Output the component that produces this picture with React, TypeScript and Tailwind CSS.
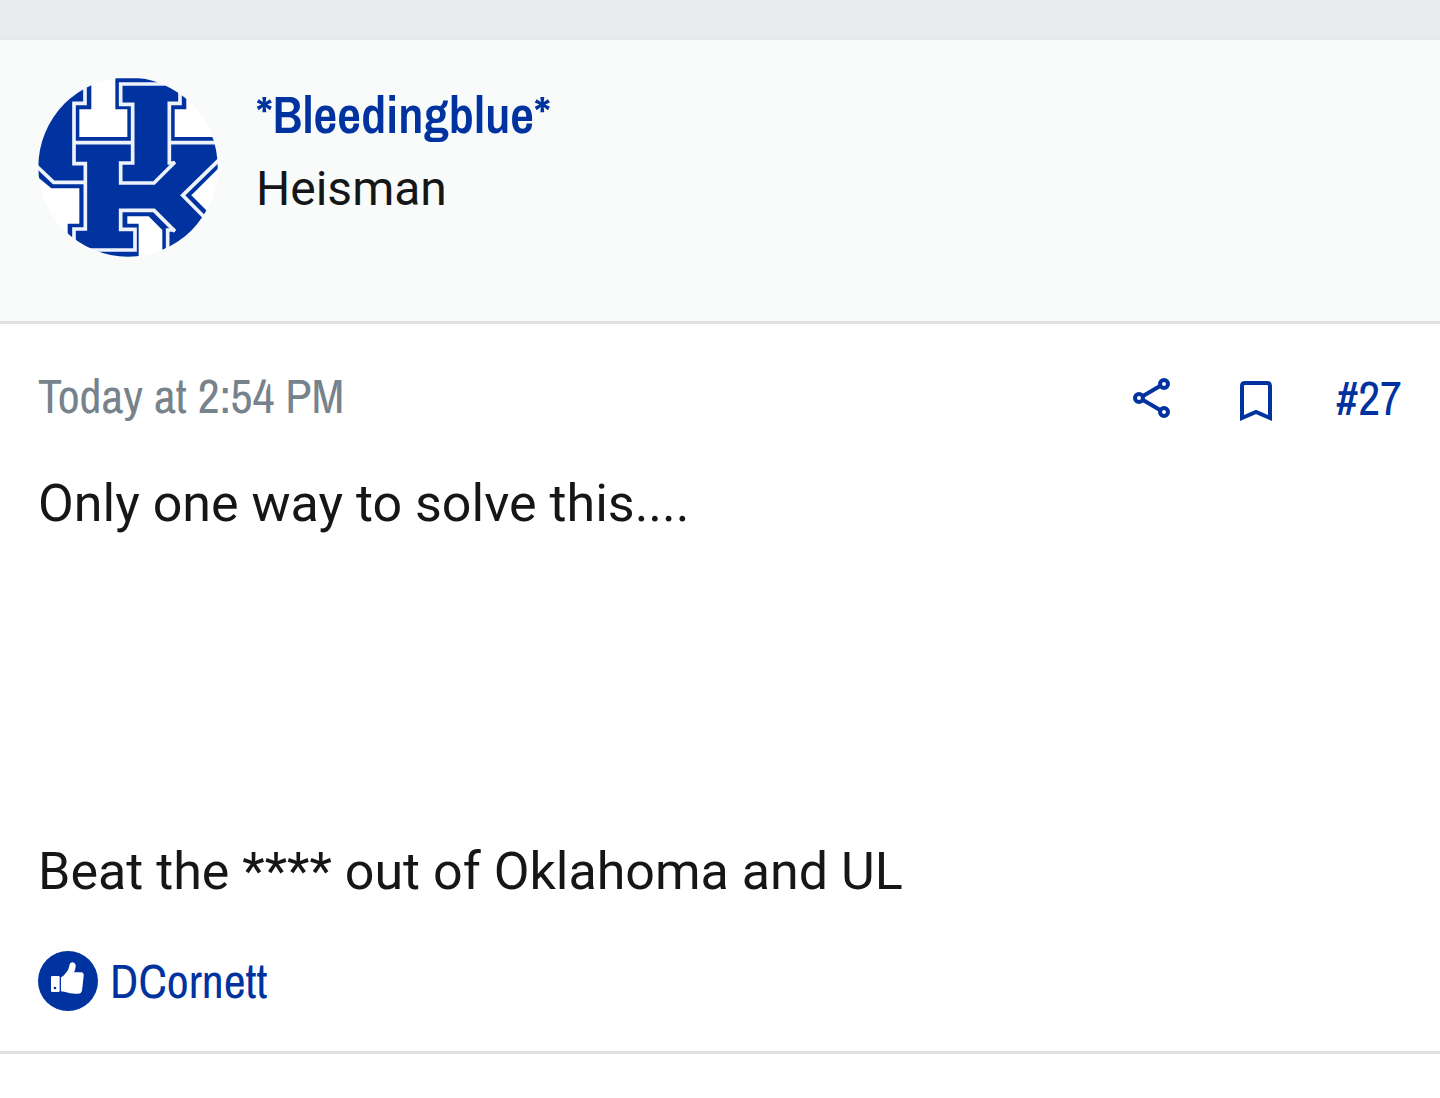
const LogoAvatar = () => {
  return (
    <svg className="size-[180px] shrink-0" viewBox="30 30 540 540" role="img" aria-label="*Bleedingblue*">
      <mask id="avatar-circle">
        <circle cx="300" cy="300" r="269" fill="#fff" />
      </mask>
      <g mask="url(#avatar-circle)">
        <rect x="0" y="0" width="600" height="600" fill="#0033a0" />
        <g fill="#fff">
          <path d="M190 0V127H154V210H298V127H262V34H400L475 80V127H440V210H600V0Z" />
          <path d="M0 306L70 364H154V470H119V600H0Z" />
          <path d="M298 448H362L403 489V600H332V470H298Z" />
          <path d="M600 275L490 385L600 495Z" />
        </g>
        <g fill="none" stroke="#eef2fb" strokeWidth="11">
          <path d="M171 20V109H138V290H172V486H138V530" />
          <path d="M20 292L77 346H172" />
          <path d="M138 227H314" />
          <path d="M410 51H278V112H314V288H278V348H378L441 285" />
          <path d="M456 60V109H424V288H441" />
          <path d="M424 227H600" />
          <path d="M580 272L464 385L550 472" />
          <path d="M441 493L378 430H278V487H321V549H140" />
          <path d="M419 580V489H441" />
        </g>
      </g>
    </svg>
  )
}

const ShareIcon = () => {
  return (
    <svg className="h-[42px] w-[38px]" viewBox="-2 0 38 42" fill="none" stroke="currentColor" strokeWidth="4" aria-hidden="true">
      <circle cx="30" cy="7" r="4" />
      <circle cx="5" cy="21" r="4" />
      <circle cx="30" cy="35" r="4" />
      <path d="M9 19L26 9M9 23L26 33" />
    </svg>
  )
}

const BookmarkIcon = () => {
  return (
    <svg className="h-12 w-[38px]" viewBox="0 0 38 48" fill="none" stroke="currentColor" strokeWidth="4" aria-hidden="true">
      <path d="M8 44V12Q8 9 11 9H33Q36 9 36 12V44L22 38Z" />
    </svg>
  )
}

const LikeIcon = () => {
  return (
    <svg className="size-[60px] shrink-0" viewBox="0 0 180 180" aria-hidden="true">
      <circle cx="90" cy="90" r="90" fill="#0033a0" />
      <g fill="#fff">
        <path d="M43 75H61Q65 75 65 79V119Q65 123 61 123H43Q39 123 39 119V79Q39 75 43 75Z" />
        <path d="M69 79Q77 75 84 65Q92 57 94 44Q96 34 104 34Q114 36 113 47Q112 56 108 64H130Q138 65 137 74L132 119Q130 127 122 128Q108 129 96 127Q82 122 69 121Z" />
      </g>
      <circle cx="51" cy="111" r="4" fill="#0033a0" />
    </svg>
  )
}

const App = () => {
  return (
    <main className="min-h-screen bg-white font-[Roboto,sans-serif] text-[#141618]">
      <div className="h-10 bg-gradient-to-b from-[#e9edf0] from-80% to-[#e6e9eb]"></div>
      <article className="border-b-3 border-[#e0e0e0]">
        <header className="flex gap-[38px] border-b-3 border-[#e0e0e0] bg-[#f9fbfa] px-[38px] pt-[37px] pb-16">
          <LogoAvatar />
          <div>
            <h4 className="font-['Archivo_Narrow',Roboto,sans-serif] text-[52px] leading-[74px] font-semibold text-[#0033a0]">
              <a href="#profile">*Bleedingblue*</a>
            </h4>
            <p className="text-[48px] leading-[76px]">Heisman</p>
          </div>
        </header>
        <div className="px-[38px] pt-9 pb-[38px]">
          <div className="flex items-center justify-between font-['Archivo_Narrow',Roboto,sans-serif] text-[48px] leading-[76px]">
            <time className="pb-1 leading-[72px] text-[#76828c]">Today at 2:54 PM</time>
            <div className="flex items-center gap-16 text-[#0033a0]">
              <a href="#share" aria-label="Share"><ShareIcon /></a>
              <button type="button" aria-label="Add bookmark"><BookmarkIcon /></button>
              <a href="#post-27">#27</a>
            </div>
          </div>
          <div className="pt-[31px] text-[52px] leading-[74px]">
            <p>Only one way to solve this....</p>
            <p className="pt-[294px]">Beat the **** out of Oklahoma and UL</p>
          </div>
          <div className="flex items-center gap-3 pt-10 font-['Archivo_Narrow',Roboto,sans-serif] text-[48px] leading-[64px] text-[#0033a0]">
            <LikeIcon />
            <a href="#reactions">DCornett</a>
          </div>
        </div>
      </article>
    </main>
  )
}

export default App
